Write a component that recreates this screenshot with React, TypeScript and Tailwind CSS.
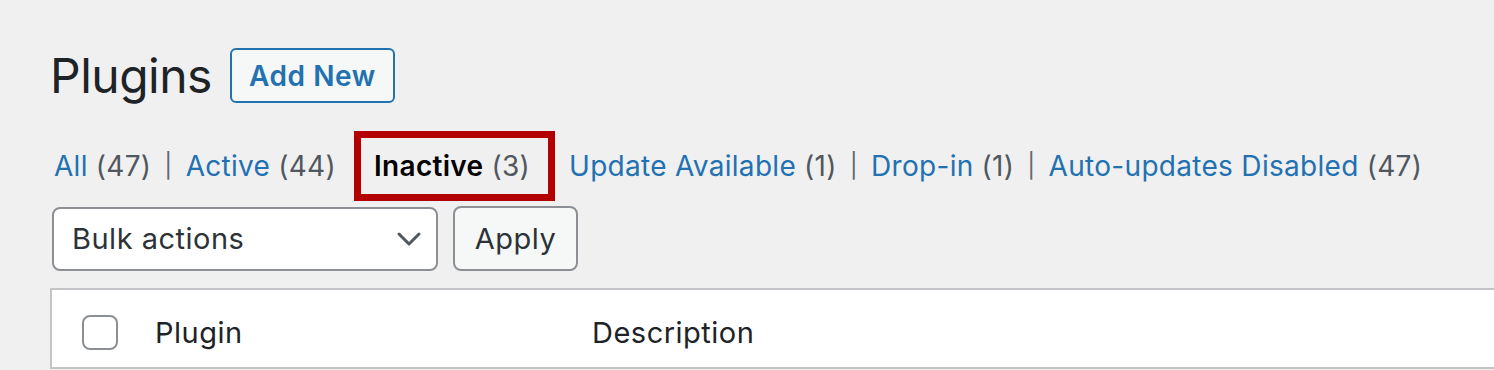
import React from 'react';

const filters = [
  { label: 'All', count: 47 },
  { label: 'Active', count: 44 },
  { label: 'Inactive', count: 3, current: true },
  { label: 'Update Available', count: 1 },
  { label: 'Drop-in', count: 1 },
  { label: 'Auto-updates Disabled', count: 47 },
];

const Separator = () => <span className="mx-[13px] text-[24px] text-[#646970]">|</span>;

export default function App() {
  return (
    <div
      className="min-h-screen overflow-hidden bg-[#f0f0f1] pl-[50px] pt-[48px]"
      style={{ fontFamily: 'Inter, "Noto Sans", sans-serif' }}
    >
      {/* Heading */}
      <div className="flex items-center gap-[18px]">
        <h1 className="text-[48px] leading-[55px] font-normal tracking-[-0.5px] text-[#1d2327]">Plugins</h1>
        <button className="h-[55px] w-[165px] rounded-[6px] border-2 border-[#2271b1] bg-[#f6f7f7] text-[28px] font-semibold tracking-[0.6px] text-[#2271b1]">
          Add New
        </button>
      </div>

      {/* Status filters */}
      <ul className="mt-[28px] flex h-[70px] items-center pl-[4px] text-[28px] tracking-[0.3px] text-[#50575e]">
        {filters.map((f, idx) => {
          const next = filters[idx + 1];
          const showSep = idx < filters.length - 1 && !f.current && !next?.current;
          if (f.current) {
            return (
              <li
                key={f.label}
                className="ml-[18px] mr-[14px] flex h-[70px] items-center border-[7px] border-[#b30000] pr-[18px] pl-[13px]"
              >
                <span className="font-semibold text-black">{f.label}</span>
                <span className="ml-[8px]">({f.count})</span>
              </li>
            );
          }
          return (
            <li key={f.label} className="flex items-center">
              <a className="text-[#2271b1]">{f.label}</a>
              <span className="ml-[8px]">({f.count})</span>
              {showSep && <Separator />}
            </li>
          );
        })}
      </ul>

      {/* Bulk actions */}
      <div className="mt-[5px] flex items-center gap-[15px] text-[29px] tracking-[0.5px] text-[#2c3338]">
        <div className="ml-[2px] flex h-[64px] w-[386px] items-center justify-between rounded-[8px] border-2 border-[#8c8f94] bg-white pr-[14px] pl-[18px]">
          <span>Bulk actions</span>
          <svg width="26" height="16" viewBox="0 0 26 16" fill="none">
            <path d="M3 3l10 10L23 3" stroke="#50575e" strokeWidth="3" strokeLinecap="round" strokeLinejoin="round" />
          </svg>
        </div>
        <button className="h-[65px] w-[125px] rounded-[8px] border-2 border-[#8c8f94] bg-[#f6f7f7]">
          Apply
        </button>
      </div>

      {/* Table header */}
      <div className="mt-[17px] flex h-[81px] items-center border-y-2 border-l-2 border-[#c3c4c7] bg-white pt-[8px] text-[29px] tracking-[0.5px] text-[#1d2327]">
        <div className="ml-[30px] h-[35px] w-[36px] rounded-[8px] border-2 border-[#8c8f94] bg-white" />
        <span className="ml-[37px] w-[437px]">Plugin</span>
        <span>Description</span>
      </div>
    </div>
  );
}
